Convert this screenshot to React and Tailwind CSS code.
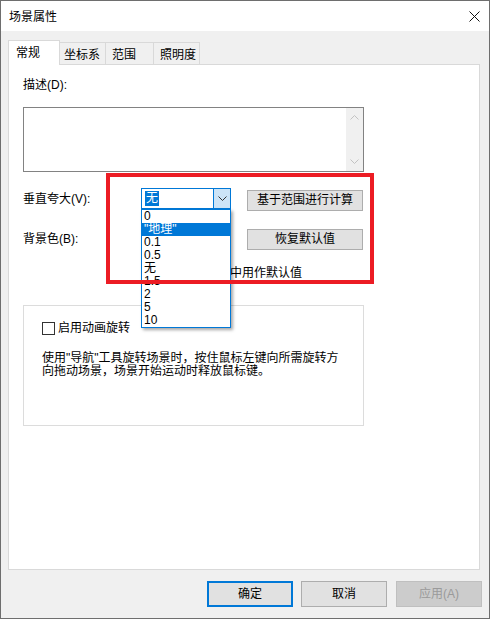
import React from 'react';

const font = "font-['Liberation_Sans','Noto_Sans_CJK_SC',sans-serif]";

const items = ['0', '"地理"', '0.1', '0.5', '无', '1.5', '2', '5', '10'];

function Chevron({ up, className }) {
  return (
    <svg width="9" height="5" viewBox="0 0 9 5" className={className}>
      <path d={up ? 'M0.5 4.5 L4.5 0.5 L8.5 4.5' : 'M0.5 0.5 L4.5 4.5 L8.5 0.5'} fill="none" stroke="currentColor" strokeWidth="1" />
    </svg>
  );
}

export default function App() {
  return (
    <div className={`relative w-[490px] h-[619px] bg-[#f0f0f0] border border-[#6e6e6e] text-[12px] leading-[14px] text-black ${font}`}>
      {/* title bar */}
      <div className="h-[30px] bg-white flex items-center justify-between">
        <span className="pl-[8px] pt-px">场景属性</span>
        <svg width="11" height="11" viewBox="0 0 11 11" className="mr-[9px] mt-px">
          <path d="M0.5 0.5 L10.5 10.5 M10.5 0.5 L0.5 10.5" stroke="#111" strokeWidth="1" />
        </svg>
      </div>

      {/* tabs */}
      <div className="flex items-end ml-[7px] mt-[9px] h-[24px]">
        <div className="relative z-10 -mb-px w-[52px] h-[25px] bg-white border border-b-0 border-[#d9d9d9] pl-[7px] pt-[5px]">常规</div>
        <div className="w-[46px] h-[22px] border border-l-0 border-b-0 border-[#d9d9d9] pl-[4px] pt-[5px]">坐标系</div>
        <div className="w-[48px] h-[22px] border border-l-0 border-b-0 border-[#d9d9d9] pl-[6px] pt-[5px]">范围</div>
        <div className="w-[46px] h-[22px] border border-l-0 border-b-0 border-[#d9d9d9] pl-[6px] pt-[5px]">照明度</div>
      </div>

      {/* panel */}
      <div className="ml-[7px] w-[472px] h-[506px] bg-white border border-[#d9d9d9] pl-[14px] pt-[13px]">
        <div>描述(D):</div>

        <div className="mt-[15px] w-[341px] h-[65px] border border-[#828282] flex justify-end">
          <div className="w-[17px] h-full bg-[#f0f0f0] flex flex-col items-center justify-between py-[7px] text-[#c2c2c2]">
            <Chevron up />
            <Chevron />
          </div>
        </div>

        <div className="mt-[16px] flex items-center h-[22px]">
          <span className="w-[118px]">垂直夸大(V):</span>
          <div className="w-[90px] h-[21px] self-start border border-[#0078d7] flex">
            <div className="flex-1 pl-[3px] pt-[2px]">
              <span className="inline-block bg-[#0078d7] text-white px-px leading-[15px]">无</span>
            </div>
            <div className="w-[17px] h-full bg-[#cce4f7] border-l border-[#0078d7] flex items-center justify-center text-[#333]">
              <Chevron />
            </div>
          </div>
          <button className="ml-[16px] w-[116px] h-[21px] mt-[2px] bg-[#e1e1e1] border border-[#adadad]">基于范围进行计算</button>
        </div>

        <div className="mt-[18px] flex items-center h-[22px]">
          <span className="w-[118px]">背景色(B):</span>
          <div className="w-[90px] h-[21px] border border-[#adadad] bg-[#e1e1e1]"></div>
          <button className="ml-[16px] w-[116px] h-[21px] bg-[#e1e1e1] border border-[#adadad]">恢复默认值</button>
        </div>

        <div className="mt-[16px] flex items-center pl-[118px]">
          <span className="w-[13px] h-[13px] border border-[#333]"></span>
          <span className="ml-[4px]">在新建的文档中用作默认值</span>
        </div>

        <div className="mt-[25px] w-[341px] h-[121px] border border-[#dcdcdc] pl-[18px] pt-[15px]">
          <div className="flex items-center">
            <span className="w-[13px] h-[13px] border border-[#333]"></span>
            <span className="ml-[3px]">启用动画旋转</span>
          </div>
          <p className="mt-[17px] leading-[13px] whitespace-nowrap">
            使用"导航"工具旋转场景时，按住鼠标左键向所需旋转方<br />
            向拖动场景，场景开始运动时释放鼠标键。
          </p>
        </div>
      </div>

      {/* footer buttons */}
      <div className="mt-[11px] mr-[7px] flex justify-end gap-[8px]">
        <button className="w-[86px] h-[26px] bg-[#e1e1e1] border-2 border-[#0078d7]">确定</button>
        <button className="w-[86px] h-[26px] bg-[#e1e1e1] border border-[#adadad]">取消</button>
        <button className="ml-px w-[86px] h-[26px] bg-[#cccccc] border border-[#bfbfbf] text-[#9a9a9a]">应用(A)</button>
      </div>

      {/* open dropdown list */}
      <ul className="absolute left-[140px] top-[208px] w-[90px] bg-white border border-[#0078d7] shadow-[2px_2px_3px_rgba(0,0,0,0.35)] leading-[13px]">
        {items.map((it, i) => (
          <li key={it} className={`h-[13px] pl-[2px] ${i === 1 ? 'bg-[#0078d7] text-white' : ''}`}>{it}</li>
        ))}
      </ul>

      {/* highlight frame */}
      <div className="absolute left-[105px] top-[172px] w-[268px] h-[111px] border-4 border-[#ec1c24] pointer-events-none"></div>
    </div>
  );
}
